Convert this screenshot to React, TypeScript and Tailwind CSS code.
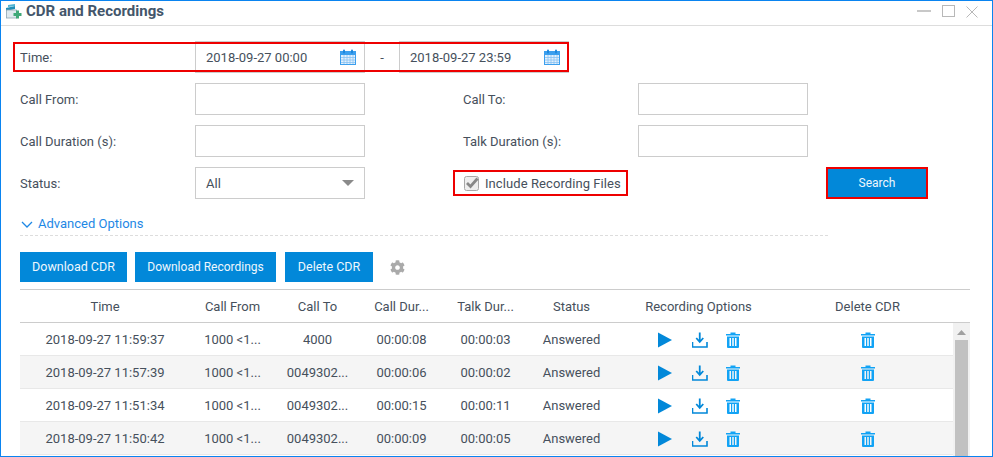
import { FaCog } from 'react-icons/fa';

const font = { fontFamily: 'Roboto, "Liberation Sans", sans-serif' };

const rows = [
  ['2018-09-27 11:59:37', '1000 <1...', '4000', '00:00:08', '00:00:03', 'Answered'],
  ['2018-09-27 11:57:39', '1000 <1...', '0049302...', '00:00:06', '00:00:02', 'Answered'],
  ['2018-09-27 11:51:34', '1000 <1...', '0049302...', '00:00:15', '00:00:11', 'Answered'],
  ['2018-09-27 11:50:42', '1000 <1...', '0049302...', '00:00:09', '00:00:05', 'Answered'],
];

const columns = 'grid grid-cols-[170px_85px_85px_83px_85px_87px_167px_171px] items-center pt-[2px] text-center';

const LogoIcon = () => (
  <svg width="17" height="17" viewBox="0 0 17 17">
    <path d="M1 5 L10 3 L10 6 L1 8 Z" fill="#1f8fb8" />
    <path d="M3 2 L10 1 L10 3 L3 4 Z" fill="#4fb3d4" />
    <rect x="1.5" y="7" width="10" height="8" fill="#dfe9ee" stroke="#8fa6b2" strokeWidth="0.8" />
    <path d="M11 7.5 h3 v2.5 h2.5 v3 H14 v2.5 h-3 V13 H8.500 v-3 H11 Z" fill="#3fa878" />
  </svg>
);

const CalendarIcon = () => (
  <svg width="16" height="16" viewBox="0 0 16 16" className="shrink-0">
    <rect x="0.500" y="2.500" width="15" height="13" fill="#e3f0fc" stroke="#3b9fee" />
    <rect x="0.500" y="2.500" width="15" height="3" fill="#3b9fee" stroke="#3b9fee" />
    <rect x="3" y="0.500" width="2" height="4" rx="1" fill="#1c86dc" />
    <rect x="11" y="0.500" width="2" height="4" rx="1" fill="#1c86dc" />
    <path d="M1 8.500 H15 M1 11 H15 M1 13.500 H15 M4 6 V15 M7 6 V15 M10 6 V15 M13 6 V15" stroke="#86c2f3" strokeWidth="0.8" />
  </svg>
);

const PlayIcon = () => (
  <svg width="16" height="16" viewBox="0 0 16 16">
    <path d="M0 0.500 L14 8 L0 15.500 Z" fill="#0288d9" />
  </svg>
);

const DownloadIcon = () => (
  <svg width="16" height="16" viewBox="0 0 16 16">
    <path d="M0.500 10 V15 H15 V10" fill="none" stroke="#0288d9" strokeWidth="1.600" />
    <path d="M7.750 0.500 V9 M4.250 6 L7.750 10 L11.250 6" fill="none" stroke="#0288d9" strokeWidth="1.800" />
  </svg>
);

const TrashIcon = () => (
  <svg width="14" height="16" viewBox="0 0 14 16">
    <path d="M0 2 H4.500 V0.500 H9.500 V2 H14 V3.500 H0 Z" fill="#12a3f5" />
    <path d="M1 4.500 H13 V15 Q13 16 12 16 H2 Q1 16 1 15 Z M3.500 6 V14 H5 V6 Z M6.250 6 V14 H7.750 V6 Z M9 6 V14 H10.500 V6 Z" fill="#12a3f5" fillRule="evenodd" />
  </svg>
);

const Field = ({ children }: { children?: React.ReactNode }) => (
  <div className="flex h-[32px] w-[170px] shrink-0 items-center border border-[#cccccc] bg-white pl-[10px] pr-[8px]">
    {children}
  </div>
);

const DateField = ({ value }: { value: string }) => (
  <Field>
    <span className="flex-1 pt-[2px]">{value}</span>
    <CalendarIcon />
  </Field>
);

const Label = ({ text, className }: { text: string; className?: string }) => (
  <div className={`w-[175px] shrink-0 pt-[2px] ${className ?? ''}`}>{text}</div>
);

const ActionButton = ({ text, className }: { text: string; className: string }) => (
  <button className={`h-[30px] bg-[#0288d9] text-center text-[#eef7fd] ${className}`}>{text}</button>
);

export default function App() {
  return (
    <div
      style={font}
      className="relative h-[457px] w-[993px] overflow-hidden border border-[#0a84f0] bg-white text-[13px] text-[#46505c]"
    >
      <div className="flex h-[25px] items-center border-b border-[#dddddd] pb-[3px] pl-[4px]">
        <LogoIcon />
        <span className="ml-[4px] text-[15px] font-bold text-[#43566b]">CDR and Recordings</span>
        <div className="ml-auto flex items-center gap-[11px] pr-[14px]">
          <svg width="14" height="14" viewBox="0 0 14 14">
            <path d="M0 6 H14" stroke="#c8c8c8" strokeWidth="2" />
          </svg>
          <svg width="13" height="13" viewBox="0 0 13 13">
            <rect x="0.500" y="0.500" width="12" height="11" fill="none" stroke="#b8b8b8" />
          </svg>
          <svg width="12" height="12" viewBox="0 0 12 12">
            <path d="M0.500 0.500 L11.500 11.500 M11.500 0.500 L0.500 11.500" stroke="#b8b8b8" />
          </svg>
        </div>
      </div>

      <div className="pl-[19px] pt-[15px]">
        <div className="mb-[10px] flex items-center">
          <Label text="Time:" />
          <DateField value="2018-09-27 00:00" />
          <div className="w-[34px] pt-[2px] text-center">-</div>
          <DateField value="2018-09-27 23:59" />
        </div>

        <div className="mb-[10px] flex items-center">
          <Label text="Call From:" />
          <Field />
          <Label text="Call To:" className="ml-[98px]" />
          <Field />
        </div>

        <div className="mb-[10px] flex items-center">
          <Label text="Call Duration (s):" />
          <Field />
          <Label text="Talk Duration (s):" className="ml-[98px]" />
          <Field />
        </div>

        <div className="flex items-center">
          <Label text="Status:" />
          <Field>
            <span className="flex-1 pt-[2px]">All</span>
            <svg width="12" height="6" viewBox="0 0 12 6" className="mr-[2px]">
              <path d="M0 0 H12 L6 6 Z" fill="#8a8a8a" />
            </svg>
          </Field>
          <div className="ml-[88px] flex h-[26px] w-[175px] items-center border-2 border-[#ee0000] pl-[9px]">
            <svg width="15" height="15" viewBox="0 0 15 15" className="shrink-0">
              <rect x="0.500" y="0.500" width="14" height="14" rx="2" fill="#eeeeee" stroke="#a8a8a8" />
              <path d="M3 7 L6.500 10.500 L13.500 2.500" fill="none" stroke="#888888" strokeWidth="2.800" />
            </svg>
            <span className="ml-[6px] whitespace-nowrap pt-[2px] tracking-[0.08px]">Include Recording Files</span>
          </div>
          <button className="ml-[198px] h-[32px] w-[102px] border-2 border-[#ee0000] bg-[#0288d9] text-[12px] text-[#eef7fd]">
            Search
          </button>
        </div>

        <div className="mt-[17px] flex h-[20px] w-[808px] items-start border-b border-dashed border-[#dddddd]">
          <svg width="12" height="7" viewBox="0 0 12 7" className="ml-[1px] mt-[5px]">
            <path d="M1 1 L6 6 L11 1" fill="none" stroke="#1e88e5" strokeWidth="1.300" />
          </svg>
          <span className="ml-[5px] leading-[16px] text-[#1e88e5]">Advanced Options</span>
        </div>

        <div className="mt-[16px] flex items-center">
          <ActionButton text="Download CDR" className="w-[107px] text-[12.5px]" />
          <ActionButton text="Download Recordings" className="ml-[8px] w-[141px] text-[12px]" />
          <ActionButton text="Delete CDR" className="ml-[9px] w-[88px] text-[12.5px]" />
          <FaCog size={15} className="ml-[17px] text-[#aaaaaa]" />
        </div>

        <div className="mt-[7px] w-[950px] border-t border-[#cccccc]">
          <div className={`${columns} h-[33px] border-b border-[#cccccc]`}>
            <div>Time</div>
            <div>Call From</div>
            <div>Call To</div>
            <div>Call Dur...</div>
            <div>Talk Dur...</div>
            <div>Status</div>
            <div>Recording Options</div>
            <div>Delete CDR</div>
          </div>

          <div className="flex">
            <div className="w-[933px]">
              {rows.map((row, i) => (
                <div key={row[0]} className={`${columns} h-[33px] border-b border-[#e8e8e8] ${i % 2 ? 'bg-[#f5f5f5]' : 'bg-white'}`}>
                  {row.map((cell, j) => (
                    <div key={j}>{cell}</div>
                  ))}
                  <div className="flex items-center justify-center gap-[18px]">
                    <PlayIcon />
                    <DownloadIcon />
                    <TrashIcon />
                  </div>
                  <div className="flex justify-center">
                    <TrashIcon />
                  </div>
                </div>
              ))}
            </div>
            <div className="flex w-[17px] flex-col items-center bg-[#f1f1f1]">
              <svg width="9" height="5" viewBox="0 0 9 5" className="mt-[7px]">
                <path d="M0 5 L4.500 0 L9 5 Z" fill="#a0a0a0" />
              </svg>
              <div className="mt-[5px] h-[120px] w-[13px] bg-[#c1c1c1]" />
            </div>
          </div>
        </div>
      </div>

      <div className="pointer-events-none absolute left-[12px] top-[41px] h-[30px] w-[556px] border-2 border-[#ee0000]" />
    </div>
  );
}
